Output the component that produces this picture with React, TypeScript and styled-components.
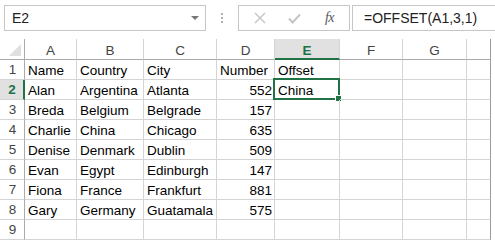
import React from "react";
import styled, { createGlobalStyle } from "styled-components";

const Global = createGlobalStyle`
  html, body { margin: 0; padding: 0; background: #fff; overflow: hidden; }
  body { font-family: "Liberation Sans", Arial, sans-serif; }
`;

const GREEN = "#217346";
const GRID = "#d4d4d4";
const DARK = "#ababab";

const Page = styled.div`
  width: 495px;
  height: 240px;
  display: flex;
  flex-direction: column;
  overflow: hidden;
`;

const FormulaBar = styled.div`
  height: 40px;
  display: flex;
  align-items: flex-start;
  padding: 5px 0 0 4px;
  box-sizing: border-box;
`;

const NameBox = styled.div`
  width: 202px;
  height: 26px;
  box-sizing: border-box;
  border: 1px solid #c6c6c6;
  display: flex;
  align-items: center;
  justify-content: space-between;
  padding: 0 6px 0 7px;
  font-size: 14px;
  color: #222;
`;

const Arrow = styled.div`
  width: 0;
  height: 0;
  border-left: 4px solid transparent;
  border-right: 4px solid transparent;
  border-top: 4px solid #777;
`;

const Dots = styled.div`
  width: 32px;
  height: 26px;
  display: flex;
  flex-direction: column;
  align-items: center;
  justify-content: center;
  gap: 2px;
  & > span { width: 2px; height: 2px; background: #b0b0b0; }
`;

const IconBox = styled.div`
  width: 112px;
  height: 26px;
  box-sizing: border-box;
  border: 1px solid #c6c6c6;
  display: flex;
  align-items: center;
  padding-left: 3px;
`;

const IconSlot = styled.div`
  width: 35px;
  display: flex;
  justify-content: center;
  align-items: center;
`;

const Fx = styled.span`
  font-family: "Liberation Serif", "Times New Roman", serif;
  font-style: italic;
  font-size: 14px;
  color: #555;
  letter-spacing: -0.5px;
`;

const FormulaInput = styled.div`
  flex: 1;
  height: 26px;
  margin-left: 2px;
  box-sizing: border-box;
  border: 1px solid #c6c6c6;
  border-right: none;
  display: flex;
  align-items: center;
  padding-left: 11px;
  font-size: 14px;
  color: #222;
`;

const Sheet = styled.div`
  display: grid;
  grid-template-columns: 25px 52px 67px 73px 58px 65px 63px 64px 24px 1fr;
  grid-auto-rows: 20px;
  grid-template-rows: 21px;
  font-size: 13.5px;
  color: #000;
`;

const Corner = styled.div`
  position: relative;
  border-right: 1px solid ${DARK};
  border-bottom: 1px solid ${DARK};
  box-sizing: border-box;
  &::after {
    content: "";
    position: absolute;
    right: 3px;
    bottom: 3px;
    width: 0;
    height: 0;
    border-left: 12px solid transparent;
    border-bottom: 12px solid #dfdfdf;
  }
`;

const ColHead = styled.div<{ $sel?: boolean; $last?: boolean }>`
  box-sizing: border-box;
  border-right: 1px solid ${(p) => (p.$last ? "#9a9a9a" : GRID)};
  border-bottom: ${(p) => (p.$sel ? `2px solid ${GREEN}` : `1px solid ${DARK}`)};
  background: ${(p) => (p.$sel ? "#e1e1e1" : "#fff")};
  color: ${(p) => (p.$sel ? GREEN : "#444")};
  font-weight: ${(p) => (p.$sel ? "bold" : "normal")};
  display: flex;
  align-items: center;
  justify-content: center;
  padding-top: 3px;
  font-size: 13.5px;
  background-clip: padding-box;
`;

const Blank = styled.div<{ $header?: boolean }>`
  border-bottom: ${(p) => (p.$header ? "1px solid #fff" : "none")};
`;

const RowHead = styled.div<{ $sel?: boolean }>`
  box-sizing: border-box;
  border-right: ${(p) => (p.$sel ? `2px solid ${GREEN}` : `1px solid ${DARK}`)};
  border-bottom: 1px solid ${GRID};
  background: ${(p) => (p.$sel ? "#e1e1e1" : "#fff")};
  color: ${(p) => (p.$sel ? GREEN : "#444")};
  font-weight: ${(p) => (p.$sel ? "bold" : "normal")};
  display: flex;
  align-items: center;
  justify-content: center;
  padding-left: 1px;
`;

const Cell = styled.div<{ $num?: boolean; $last?: boolean }>`
  position: relative;
  box-sizing: border-box;
  border-right: 1px solid ${(p) => (p.$last ? "#9a9a9a" : GRID)};
  border-bottom: 1px solid ${GRID};
  display: flex;
  align-items: center;
  justify-content: ${(p) => (p.$num ? "flex-end" : "flex-start")};
  padding: 1px 2px 0 3px;
  white-space: nowrap;
`;

const Selection = styled.div`
  position: absolute;
  left: -2px;
  top: -2px;
  right: -1px;
  bottom: -1px;
  border: 2px solid ${GREEN};
  pointer-events: none;
  &::after {
    content: "";
    position: absolute;
    right: -4px;
    bottom: -4px;
    width: 5px;
    height: 5px;
    background: ${GREEN};
    border: 1px solid #fff;
  }
`;

const CellText = styled.span`
  position: relative;
`;

const cols = ["A", "B", "C", "D", "E", "F", "G", ""];

const data: (string | number)[][] = [
  ["Name", "Country", "City", "Number", "Offset"],
  ["Alan", "Argentina", "Atlanta", 552, "China"],
  ["Breda", "Belgium", "Belgrade", 157, ""],
  ["Charlie", "China", "Chicago", 635, ""],
  ["Denise", "Denmark", "Dublin", 509, ""],
  ["Evan", "Egypt", "Edinburgh", 147, ""],
  ["Fiona", "France", "Frankfurt", 881, ""],
  ["Gary", "Germany", "Guatamala", 575, ""],
  ["", "", "", "", ""],
];

const Cross = () => (
  <svg width="12" height="12" viewBox="0 0 12 12">
    <path d="M1 1 L11 11 M11 1 L1 11" stroke="#c4c4c4" strokeWidth="1.4" fill="none" />
  </svg>
);

const Check = () => (
  <svg width="13" height="11" viewBox="0 0 13 11">
    <path d="M1 5.5 L4.5 9.5 L12 1.5" stroke="#c4c4c4" strokeWidth="2" fill="none" />
  </svg>
);

export default function App() {
  return (
    <Page>
      <Global />
      <FormulaBar>
        <NameBox>
          <span>E2</span>
          <Arrow />
        </NameBox>
        <Dots>
          <span />
          <span />
          <span />
        </Dots>
        <IconBox>
          <IconSlot>
            <Cross />
          </IconSlot>
          <IconSlot>
            <Check />
          </IconSlot>
          <IconSlot>
            <Fx>fx</Fx>
          </IconSlot>
        </IconBox>
        <FormulaInput>=OFFSET(A1,3,1)</FormulaInput>
      </FormulaBar>
      <Sheet>
        <Corner />
        {cols.map((c, i) => (
          <ColHead key={i} $sel={c === "E"} $last={i === cols.length - 1}>
            {c}
          </ColHead>
        ))}
        <Blank $header />
        {data.map((row, r) => (
          <React.Fragment key={r}>
            <RowHead $sel={r === 1}>{r + 1}</RowHead>
            {[0, 1, 2, 3, 4, 5, 6, 7].map((ci) => {
              const v = ci < row.length ? row[ci] : "";
              return (
                <Cell key={ci} $num={typeof v === "number"} $last={ci === 7}>
                  {r === 1 && ci === 4 && <Selection />}
                  <CellText>{v}</CellText>
                </Cell>
              );
            })}
            <Blank />
          </React.Fragment>
        ))}
      </Sheet>
    </Page>
  );
}
